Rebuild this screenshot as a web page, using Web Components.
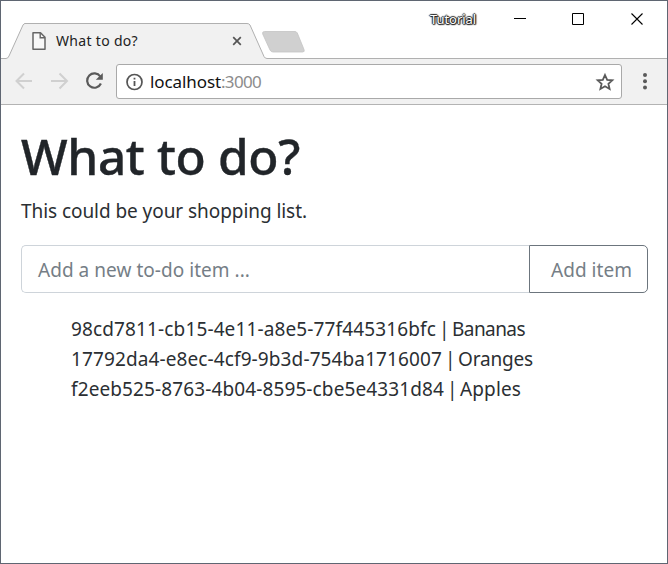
<!DOCTYPE html>
<html lang="en">
<head>
<meta charset="utf-8">
<title>What to do?</title>
<style>
html,body{margin:0;height:100%;overflow:hidden;background:#fff}
body{font-family:"Noto Sans","Open Sans",sans-serif;font-weight:400;color:#2b2f33}
</style>
</head>
<body>
<app-window>
  <title-bar slot="bar"></title-bar>
  <address-bar slot="bar"></address-bar>
  <todo-page></todo-page>
</app-window>
<script>
const define = (name, html, init) => customElements.define(name, class extends HTMLElement {
  constructor() { super(); this.attachShadow({mode: 'open'}).innerHTML = html; }
  connectedCallback() { if (init) init(this); }
});

/* One line of text whose tracking is set so that it takes the width in its "w" attribute. */
define('text-line', `<style>:host{display:block;white-space:nowrap}span{display:inline-block}</style><span><slot></slot></span>`, el => {
  const s = el.shadowRoot.querySelector('span');
  s.style.letterSpacing = (+el.getAttribute('w') - s.getBoundingClientRect().width) / el.textContent.length + 'px';
});

define('todo-item', `<style>:host{display:flex;gap:3px;font-size:19px;line-height:30px}</style><slot></slot>`);

define('app-window', `<style>
:host{display:flex;flex-direction:column;box-sizing:border-box;width:668px;height:564px;border:1px solid #5f6672;background:#fff}
</style><slot name="bar"></slot><slot></slot>`);

define('title-bar', `<style>
:host{display:grid;grid-template:58px / 1fr;height:58px}
:host>*{grid-area:1/1}
svg{display:block}
.labels{display:flex;align-items:flex-start}
.tab{font-size:14px;line-height:20px;color:#222;padding:30px 0 0 55px;width:374px;box-sizing:content-box}
.tut{font-size:13px;line-height:18px;color:#fff;padding-top:9px;text-shadow:-1px 0 1px #222,1px 0 1px #222,0 -1px 1px #222,0 1px 1px #222,1px 1px 1px #555}
</style>
<svg width="666" height="58" viewBox="1 1 666 58" fill="none">
 <path d="M1 59V58.500H6Q8 58.500 9 56L23 25Q24 23.500 25 23.500H247Q249 23.500 250 25L264 56.500Q265 58.500 267 58.500H667V59Z" fill="#f1f1f1"/>
 <path d="M1 58.500H6Q8 58.500 9 56L23 25Q24 23.500 25 23.500H247Q249 23.500 250 25L264 56.500Q265 58.500 267 58.500H667" stroke="#b0b0b0"/>
 <path d="M264.500 31.500H295Q296.500 31.500 297.300 33L304 49.500Q305 52 302.500 52H273Q271 52 270 50L262.700 34Q262 31.500 264.500 31.500Z" fill="#d0d0d0" stroke="#c4c4c4" stroke-width=".8"/>
 <path d="M33 32.800H40.500L45 37.300V49.200H33Z" fill="#f8f8f8" stroke="#666" stroke-width="1.500" stroke-linejoin="round"/>
 <path d="M40.200 33V37.800H45" stroke="#666" stroke-width="1.400"/>
 <path d="M233.200 37.200L240.800 44.800M240.800 37.200L233.200 44.800" stroke="#555" stroke-width="1.700"/>
 <path d="M514 18.500H526M572.500 13.500H583.500V24.500H572.500Z" stroke="#000"/>
 <path d="M631.500 13.500L642.500 24.500M642.500 13.500L631.500 24.500" stroke="#000" stroke-width="1.100"/>
</svg>
<div class="labels"><text-line class="tab" w="82">What to do?</text-line><text-line class="tut" w="46">Tutorial</text-line></div>`);

define('address-bar', `<style>
:host{display:flex;box-sizing:border-box;height:46px;padding-top:5px;background:#f1f1f1;border-bottom:1px solid #b3b3b3}
svg{display:block;flex:none}
.field{display:flex;box-sizing:border-box;width:506px;height:35px;background:#fff;border:1px solid #a9a9a9;border-radius:3px;font-size:17px;line-height:34px}
.host{color:#111;width:71px}.port{color:#8c8c8c;flex:1}
</style>
<svg width="115" height="35" viewBox="1 64 115 35" fill="none">
 <path d="M32 81H17M24 73.500L16.500 81L24 88.500M51 81H66M59.500 73.500L67 81L59.500 88.500" stroke="#d0d0d0" stroke-width="2"/>
 <path d="M100.300 76.500A7.200 7.200 0 1 0 100.900 83.500" stroke="#5a5a5a" stroke-width="2.200"/>
 <path d="M102.800 73V79.800H95.800Z" fill="#5a5a5a"/>
</svg>
<div class="field">
<svg width="33" height="33" viewBox="117 65 33 33"><circle cx="134.500" cy="82" r="7.500" fill="none" stroke="#555" stroke-width="1.700"/><path d="M133.600 81H135.400V86H133.600ZM133.600 77.800H135.400V79.600H133.600Z" fill="#555"/></svg>
<text-line class="host" w="71">localhost</text-line><text-line class="port" w="40">:3000</text-line>
<svg width="34" height="33" viewBox="587 65 34 33"><path d="M605 75L607.200 79.900L612.300 80.300L608.400 83.800L609.600 89L605 86.300L600.400 89L601.600 83.800L597.700 80.300L602.800 79.900Z" fill="none" stroke="#5a5a5a" stroke-width="1.800"/></svg>
</div>
<svg width="45" height="35" viewBox="622 64 45 35" fill="#5a5a5a"><circle cx="645" cy="75" r="2"/><circle cx="645" cy="81.200" r="2"/><circle cx="645" cy="87.400" r="2"/></svg>`);

define('todo-page', `<style>
:host{display:block;padding:19px 19px 0 20px}
h1{margin:0;font-size:49.5px;line-height:64px;font-weight:500;color:#212529;-webkit-text-stroke:.4px #212529}
p{margin:0;font-size:19px;line-height:30px;padding-top:8px}
todo-form{margin-top:19px}
ul{list-style:none;margin:0;padding:21px 0 0 50px}
</style>
<h1><text-line w="279">What to do?</text-line></h1>
<p><text-line w="286">This could be your shopping list.</text-line></p>
<todo-form></todo-form>
<ul>
<todo-item><text-line w="365">98cd7811-cb15-4e11-a8e5-77f445316bfc</text-line> <text-line w="10">|</text-line> <text-line w="73">Bananas</text-line></todo-item>
<todo-item><text-line w="371">17792da4-e8ec-4cf9-9b3d-754ba1716007</text-line> <text-line w="10">|</text-line> <text-line w="75">Oranges</text-line></todo-item>
<todo-item><text-line w="373">f2eeb525-8763-4b04-8595-cbe5e4331d84</text-line> <text-line w="10">|</text-line> <text-line w="61">Apples</text-line></todo-item>
</ul>`);

define('todo-form', `<style>
:host{display:flex;height:48px;font-size:19px;line-height:48px;color:#757e86}
.input{box-sizing:border-box;width:508px;border:1px solid #ced4da;border-right:0;border-radius:5px 0 0 5px;padding-left:16px;margin:0}
.button{box-sizing:border-box;width:119px;border:1px solid #6c757d;border-radius:0 5px 5px 0;padding-left:21px}
</style>
<div class="input"><text-line w="212">Add a new to-do item ...</text-line></div>
<div class="button" role="button"><text-line w="81">Add item</text-line></div>`);
</script>
</body>
</html>
